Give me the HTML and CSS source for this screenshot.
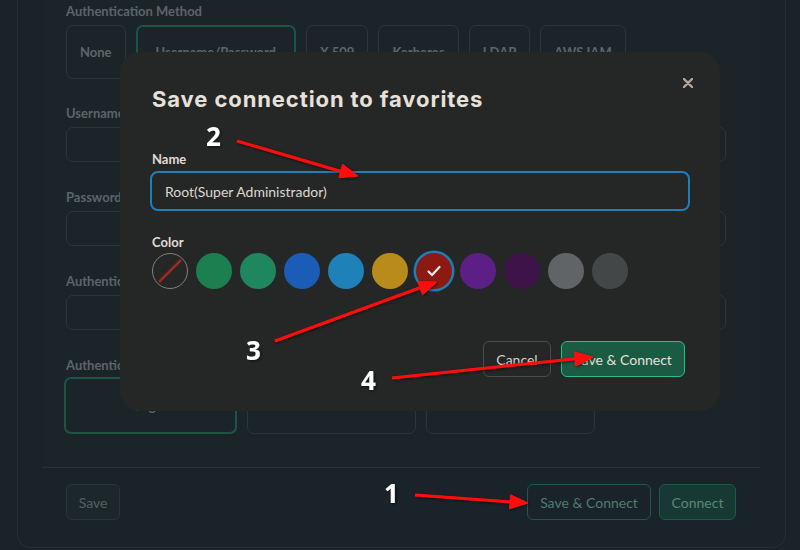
FILE: index.html
```html
<!DOCTYPE html>
<html>
<head>
<meta charset="utf-8">
<link rel="stylesheet" href="styles.css">
</head>
<body>
<div class="shell">
  <div class="form">
    <div class="label first">Authentication Method</div>
    <div class="options">
      <div class="opt">None</div>
      <div class="opt selected">Username/Password</div>
      <div class="opt">X.509</div>
      <div class="opt">Kerberos</div>
      <div class="opt">LDAP</div>
      <div class="opt">AWS IAM</div>
    </div>
    <div class="label">Username</div>
    <div class="field"></div>
    <div class="label gap">Password</div>
    <div class="field"></div>
    <div class="label gap">Authentication Database</div>
    <div class="field"></div>
    <div class="label gap">Authentication Mechanism</div>
    <div class="cards">
      <div class="card selected">Login</div>
      <div class="card">SCRAM-SHA-1</div>
      <div class="card">SCRAM-SHA-256</div>
    </div>
  </div>
  <div class="footer">
    <div class="btn ghost">Save</div>
    <div class="footer-right">
      <div class="btn outline-green">Save &amp; Connect</div>
      <div class="btn fill-green">Connect</div>
    </div>
  </div>
</div>

<div class="modal">
  <svg class="close" width="10" height="10" viewBox="0 0 10 10"><path d="M1 1L9 9M9 1L1 9" stroke="#b5ab9f" stroke-width="2.4" stroke-linecap="round"/></svg>
  <h1 class="title">Save connection to favorites</h1>
  <div class="m-label name-label">Name</div>
  <div class="m-input">Root(Super Administrador)</div>
  <div class="m-label color-label">Color</div>
  <div class="swatches">
    <div class="sw none"><svg width="36" height="36" viewBox="0 0 36 36"><line x1="7" y1="29" x2="29" y2="7" stroke="#9a2b24" stroke-width="2.5"/></svg></div>
    <div class="sw c1"></div>
    <div class="sw c2"></div>
    <div class="sw c3"></div>
    <div class="sw c4"></div>
    <div class="sw c5"></div>
    <div class="sw c6 active"><svg width="36" height="36" viewBox="0 0 36 36"><path d="M12.5 18.5L16 22L23.5 14" fill="none" stroke="#f1ece6" stroke-width="2.2" stroke-linecap="round" stroke-linejoin="round"/></svg></div>
    <div class="sw c7"></div>
    <div class="sw c8"></div>
    <div class="sw c9"></div>
    <div class="sw c10"></div>
  </div>
  <div class="m-actions">
    <div class="mbtn cancel">Cancel</div>
    <div class="mbtn primary">Save &amp; Connect</div>
  </div>
</div>

<svg class="annot" width="800" height="550" viewBox="0 0 800 550">
  <defs>
    <filter id="sh" x="-20%" y="-20%" width="140%" height="140%">
      <feDropShadow dx="1" dy="1" stdDeviation="1.5" flood-color="#000" flood-opacity="0.6"/>
    </filter>
  </defs>
  <g filter="url(#sh)" fill="#ff0d0d" stroke="#ff0d0d">
    <line x1="237" y1="141" x2="343" y2="172" stroke-width="3"/>
    <polygon points="358,176 338.8,177.7 342.6,164.3" stroke-width="1"/>
    <line x1="275" y1="341" x2="422" y2="287" stroke-width="3"/>
    <polygon points="437,282 422.5,294.8 417.7,281.6" stroke-width="1"/>
    <line x1="392" y1="378" x2="578" y2="358.5" stroke-width="3"/>
    <polygon points="593,357 575.8,365.9 574.4,351.9" stroke-width="1"/>
    <line x1="415" y1="495" x2="512" y2="502" stroke-width="3"/>
    <polygon points="528,503 509.6,508.7 510.5,494.7" stroke-width="1"/>
  </g>
  <g class="nums" filter="url(#sh)">
    <text x="206" y="146">2</text>
    <text x="246" y="360">3</text>
    <text x="361" y="390">4</text>
    <text x="384" y="503">1</text>
  </g>
</svg>
</body>
</html>
```
FILE: styles.css
```css
* { box-sizing: border-box; }
html, body { margin: 0; padding: 0; }
body {
  width: 800px;
  height: 550px;
  overflow: hidden;
  background: #1a2329;
  font-family: Lato, "Liberation Sans", sans-serif;
  position: relative;
}
.shell {
  margin-left: 17px;
  width: 769px;
  height: 548px;
  border: 1px solid #252f36;
  border-top: none;
  border-radius: 0 0 14px 14px;
  background: #1a2329;
}
.form {
  margin-left: 24px;
  width: 718px;
  height: 468px;
  border-bottom: 1px solid #283238;
  background: #1b2429;
  padding: 3px 0 0 24px;
}
.label {
  font-size: 13px;
  font-weight: 700;
  line-height: 16px;
  color: #5b6469;
  margin-top: 26px;
}
.label.first { margin-top: 0; }
.label.gap { margin-top: 27px; }
.options {
  display: flex;
  gap: 10px;
  margin-top: 6px;
}
.opt {
  height: 54px;
  padding: 0 13px;
  display: flex;
  align-items: center;
  border: 1px solid #2b353c;
  border-radius: 7px;
  font-size: 13px;
  font-weight: 700;
  color: #5d666b;
}
.opt.selected {
  border: 2px solid #1d5443;
  padding: 0 18px;
}
.field {
  margin-top: 6px;
  width: 660px;
  height: 35px;
  border: 1px solid #2b353c;
  border-radius: 7px;
}
.cards {
  display: grid;
  grid-template-columns: 173px 169px 169px;
  gap: 10px;
  margin-top: 4px;
  margin-left: -2px;
}
.card {
  height: 57px;
  border: 1px solid #2b353c;
  border-radius: 7px;
  display: flex;
  align-items: center;
  justify-content: center;
  font-size: 13px;
  font-weight: 700;
  color: #5d666b;
}
.card.selected { border: 2px solid #1d5443; }
.footer {
  display: flex;
  justify-content: space-between;
  padding: 16px 49px 0 48px;
}
.footer-right { display: flex; gap: 8px; }
.btn {
  height: 36px;
  display: flex;
  align-items: center;
  justify-content: center;
  border-radius: 6px;
  font-size: 14px;
  padding: 0 12px;
}
.btn.ghost {
  width: 54px;
  border: 1px solid #2a3439;
  background: #1c272b;
  color: #56605f;
}
.btn.outline-green {
  width: 124px;
  border: 1px solid #1f5a48;
  color: #4f7d6e;
}
.btn.fill-green {
  width: 77px;
  border: 1px solid #1f5a48;
  background: #163a33;
  color: #5d8578;
}

.modal {
  position: absolute;
  left: 120px;
  top: 52px;
  width: 600px;
  height: 359px;
  background: #252626;
  border-radius: 20px;
  padding: 33px 32px 0 32px;
}
.close {
  position: absolute;
  left: 563px;
  top: 26px;
}
.title {
  margin: 0;
  font-family: Inter, Lato, sans-serif;
  font-size: 22px;
  line-height: 28px;
  font-weight: 700;
  letter-spacing: 0.9px;
  color: #e7e1d9;
}
.m-label {
  font-size: 13px;
  font-weight: 700;
  line-height: 16px;
  color: #e2ddd5;
}
.name-label { margin-top: 38px; }
.m-input {
  margin: 4px -2px 0 -2px;
  height: 40px;
  border: 2px solid #1f7fb8;
  border-radius: 8px;
  padding-left: 13px;
  display: flex;
  align-items: center;
  font-size: 14px;
  color: #ddd8cf;
}
.color-label { margin-top: 23px; }
.swatches {
  display: flex;
  gap: 8px;
  margin-top: 3px;
}
.sw {
  width: 36px;
  height: 36px;
  border-radius: 50%;
  flex: none;
}
.sw svg { display: block; }
.sw.none { border: 1px solid #8a8077; }
.sw.none svg { margin: -1px; }
.c1 { background: #1b7f4f; }
.c2 { background: #208660; }
.c3 { background: #1a5cb6; }
.c4 { background: #1e81b8; }
.c5 { background: #b98b1c; }
.c6 { background: #8c1a12; }
.c6.active { box-shadow: 0 0 0 2.5px #1e7fb8; }
.c7 { background: #5c1f86; }
.c8 { background: #3d1349; }
.c9 { background: #606466; }
.c10 { background: #434748; }
.m-actions {
  display: flex;
  justify-content: flex-end;
  gap: 10px;
  margin-top: 52px;
  margin-right: 3px;
}
.mbtn {
  height: 36px;
  border-radius: 6px;
  display: flex;
  align-items: center;
  justify-content: center;
  font-size: 14px;
}
.mbtn.cancel {
  width: 68px;
  border: 1px solid #4b4d4d;
  color: #d3cfc7;
}
.mbtn.primary {
  width: 124px;
  border: 1px solid #2dbd87;
  background: #1b5a43;
  color: #e5e1d9;
}
.annot {
  position: absolute;
  left: 0;
  top: 0;
  pointer-events: none;
}
.nums text {
  font-family: "Open Sans", "DejaVu Sans", sans-serif;
  font-weight: 700;
  font-size: 26px;
  fill: #ffffff;
}
```
